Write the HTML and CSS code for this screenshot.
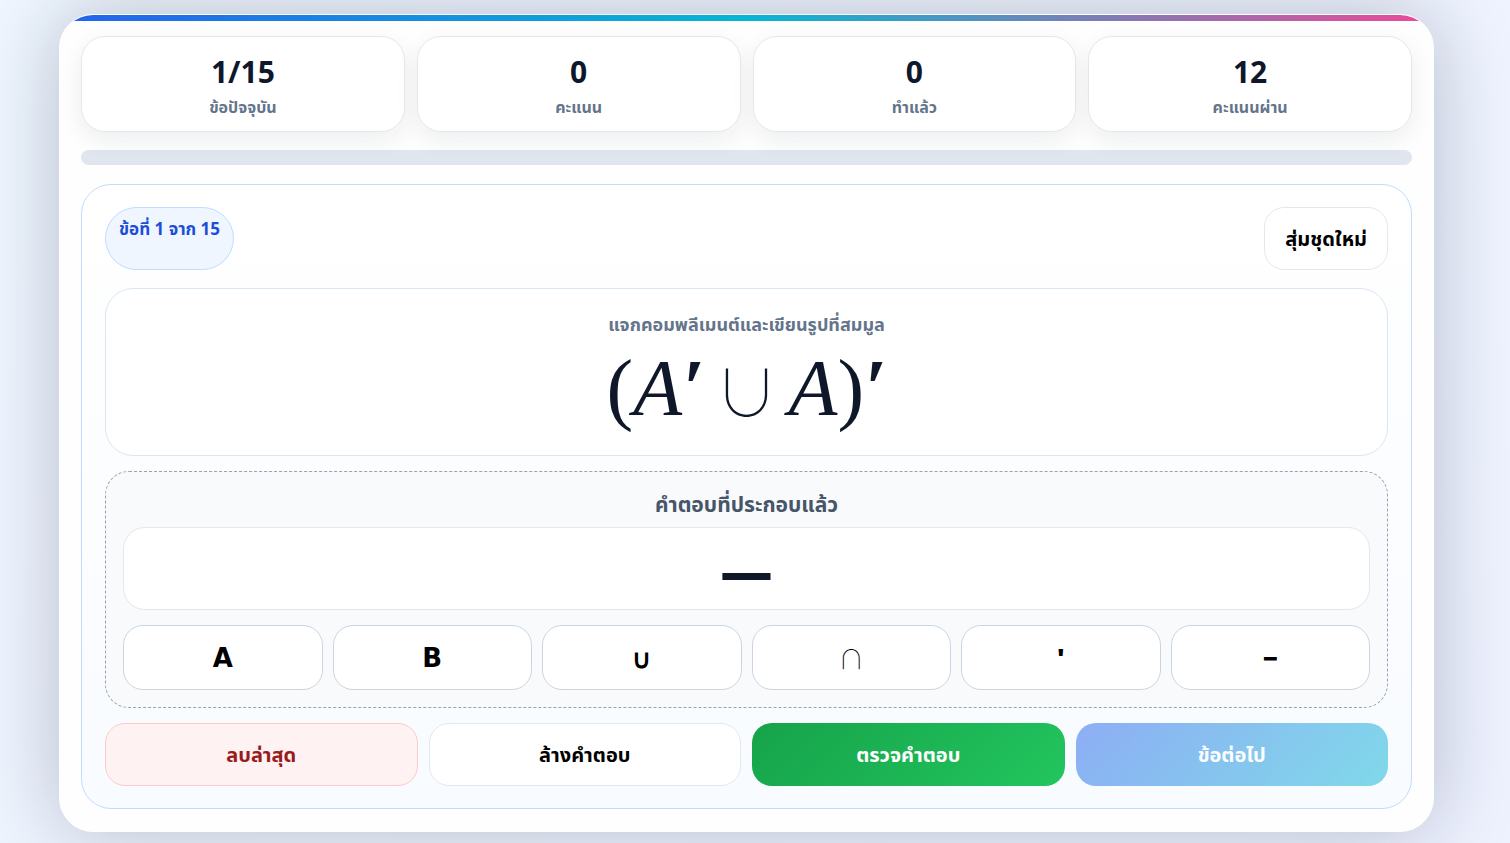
FILE: index.html
```html
<!DOCTYPE html>
<html lang="th">
<head>
  <meta charset="UTF-8">
  <meta name="viewport" content="width=device-width, initial-scale=1.0">
  <title>แจกคอมพลีเมนต์ของเซต</title>
  <link rel="stylesheet" href="styles.css">
</head>
<body>

  <main class="card">
    <section class="stats">
      <div class="stat"><b>1/15</b><span>ข้อปัจจุบัน</span></div>
      <div class="stat"><b>0</b><span>คะแนน</span></div>
      <div class="stat"><b>0</b><span>ทำแล้ว</span></div>
      <div class="stat"><b>12</b><span>คะแนนผ่าน</span></div>
    </section>

    <div class="progress"></div>

    <section class="quiz">
      <div class="quiz-top">
        <div class="pill">ข้อที่ 1 จาก 15</div>
        <button type="button" class="btn shuffle">สุ่มชุดใหม่</button>
      </div>

      <div class="question">
        <div class="hint">แจกคอมพลีเมนต์และเขียนรูปที่สมมูล</div>
        <div class="formula">
          <span>(</span><i>A</i><span class="prime">′</span>
          <span class="op">∪</span>
          <i>A</i><span>)</span><span class="prime">′</span>
        </div>
      </div>

      <div class="answer">
        <div class="answer-title">คำตอบที่ประกอบแล้ว</div>
        <div class="answer-box">—</div>
        <div class="keys">
          <button type="button" class="key letter">A</button>
          <button type="button" class="key letter">B</button>
          <button type="button" class="key">∪</button>
          <button type="button" class="key thin">∩</button>
          <button type="button" class="key">'</button>
          <button type="button" class="key">−</button>
        </div>
      </div>

      <div class="actions">
        <button type="button" class="btn danger">ลบล่าสุด</button>
        <button type="button" class="btn">ล้างคำตอบ</button>
        <button type="button" class="btn check">ตรวจคำตอบ</button>
        <button type="button" class="btn next" disabled>ข้อต่อไป</button>
      </div>
    </section>
  </main>

</body>
</html>
```
FILE: styles.css
```css
* {
  box-sizing: border-box;
}
body {
  margin: 0;
  padding: 14px 76px 11px 59px;
  min-height: 100vh;
  font-family: "Noto Sans", "Noto Sans Thai", sans-serif;
  color: #0f172a;
  background: linear-gradient(135deg, #eff6ff, #eef2ff);
}
button {
  font-family: inherit;
  cursor: pointer;
}
.card {
  position: relative;
  overflow: hidden;
  padding: 21px 21px 22px;
  border: 1px solid #fff;
  border-radius: 34px;
  background: #fefefe;
  box-shadow: 0 0 80px rgba(15, 23, 42, 0.25);
}
.card::before {
  content: "";
  position: absolute;
  top: 0;
  left: 0;
  right: 0;
  height: 6px;
  background: linear-gradient(90deg, #2563eb, #06b6d4, #ec4899);
}
.stats {
  display: grid;
  grid-template-columns: repeat(4, 1fr);
  gap: 12px;
}
.stat {
  display: flex;
  flex-direction: column;
  align-items: center;
  padding: 15px;
  height: 96px;
  border: 1px solid #e2e8f0;
  border-radius: 24px;
  background: #fff;
  box-shadow: 0 8px 24px rgba(15, 23, 42, 0.07);
}
.stat b {
  font-size: 30px;
  line-height: 40px;
}
.stat span {
  font-size: 16px;
  line-height: 30px;
  font-weight: 700;
  color: #64748b;
}
.progress {
  height: 15px;
  margin-top: 18px;
  border-radius: 999px;
  background: #e0e6ee;
}
.quiz {
  margin-top: 19px;
  padding: 22px 23px;
  border: 1px solid #bfdbfe;
  border-radius: 30px;
  background: linear-gradient(180deg, #fff, #f8fbff);
}
.quiz-top {
  display: flex;
  justify-content: space-between;
}
.pill {
  padding: 6px 13px;
  border: 1px solid #bfdbfe;
  border-radius: 999px;
  background: #eff6ff;
  color: #1d4ed8;
  font-size: 17px;
  line-height: 30px;
  font-weight: 700;
}
.btn {
  height: 63px;
  padding: 0 17px;
  border: 1px solid #e2e8f0;
  border-radius: 20px;
  background: #fff;
  color: #000;
  font-size: 20px;
  line-height: 30px;
  font-weight: 700;
}
.shuffle {
  padding: 0 20px;
}
.question {
  height: 168px;
  margin-top: 18px;
  padding: 20px;
  border: 1px solid #dbe6f3;
  border-radius: 28px;
  background: #fff;
  text-align: center;
}
.hint {
  font-size: 18px;
  line-height: 30px;
  font-weight: 700;
  color: #64748b;
}
.formula {
  display: flex;
  justify-content: center;
  font-family: "Liberation Serif", serif;
  font-size: 80px;
  line-height: 98px;
}
.op {
  margin: 0 10px;
  font-family: "Noto Sans CJK JP", sans-serif;
  font-weight: 100;
  font-size: 64px;
}
.prime {
  font-style: italic;
  font-weight: 700;
}
.answer {
  margin-top: 15px;
  padding: 17px;
  border: 1px dashed #94a3b8;
  border-radius: 24px;
  background: #f8fafc;
}
.answer-title {
  font-size: 21px;
  line-height: 30px;
  font-weight: 700;
  text-align: center;
  color: #475569;
}
.answer-box {
  height: 83px;
  margin-top: 8px;
  border: 1px solid #e2e8f0;
  border-radius: 22px;
  background: #fff;
  font-size: 52px;
  line-height: 83px;
  font-weight: 900;
  text-align: center;
}
.keys {
  display: grid;
  grid-template-columns: repeat(6, 1fr);
  gap: 10px;
  margin-top: 15px;
}
.key {
  height: 65px;
  border: 1px solid #cbd5e1;
  border-radius: 20px;
  background: #fff;
  color: #000;
  font-size: 26px;
  font-weight: 900;
}
.letter {
  font-family: "DejaVu Sans", sans-serif;
}
.thin {
  font-family: "Noto Sans CJK JP", sans-serif;
  font-weight: 100;
}
.actions {
  display: grid;
  grid-template-columns: repeat(4, 1fr);
  gap: 11px;
  margin-top: 15px;
}
.danger {
  border-color: #fecaca;
  background: #fef2f2;
  color: #991b1b;
}
.check {
  border: none;
  background: linear-gradient(135deg, #16a34a, #22c55e);
  color: #fff;
}
.next {
  border: none;
  background: linear-gradient(135deg, #2563eb, #06b6d4);
  color: #fff;
  opacity: 0.5;
}
```
